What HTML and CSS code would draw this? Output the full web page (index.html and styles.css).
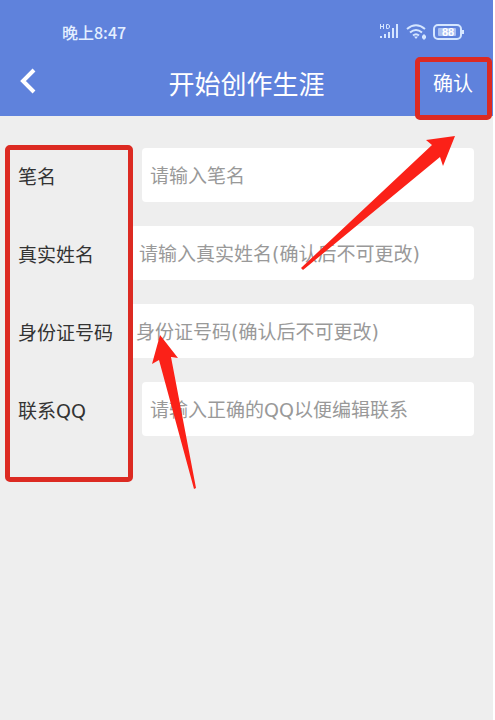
FILE: index.html
```html
<!DOCTYPE html>
<html lang="zh-CN">
<head>
<meta charset="utf-8">
<meta name="viewport" content="width=device-width, initial-scale=1">
<title>开始创作生涯</title>
<link rel="stylesheet" href="styles.css">
</head>
<body>
<div class="screen">
  <header class="header">
    <div class="status">
      <span class="time">晚上8:47</span>
      <svg class="status-icons" width="86" height="20" viewBox="0 0 86 20" aria-hidden="true">
        <g fill="none" stroke="#d5e6ff" stroke-width="1">
          <path d="M1.500 2v5M4.500 2v5M1.500 4.500h3M7.500 2.500v4h1.500l1.500-1v-2l-1.500-1z"/>
        </g>
        <g fill="#d5e6ff">
          <rect x="1" y="14" width="2" height="2"/>
          <rect x="5" y="12" width="2" height="4"/>
          <rect x="9" y="10" width="2" height="6"/>
          <rect x="13" y="6" width="2" height="10"/>
          <rect x="17" y="2" width="2" height="14"/>
        </g>
        <g fill="none" stroke="#d5e6ff" stroke-width="2">
          <path d="M28 7q9-7.500 18 0M31 10.500q6-5 12 0M34 13.500q3-2.500 6 0"/>
        </g>
        <path d="M35 14.500h4l-2 2.500zM43 14l2-2 2 2v2l-2 2-2-2z" fill="#d5e6ff"/>
        <rect x="55" y="3" width="27" height="14" rx="4" fill="none" stroke="#d5e6ff" stroke-width="2"/>
        <rect x="59" y="6" width="18" height="8" rx="1" fill="#a9c0f2"/>
        <path d="M84 8v4" stroke="#d5e6ff" stroke-width="2"/>
        <text class="charge" x="69" y="14" text-anchor="middle">88</text>
      </svg>
    </div>
    <div class="bar">
      <button class="back" type="button" aria-label="返回">
        <svg width="18" height="28" viewBox="0 0 18 28" aria-hidden="true">
          <path d="M15 2L4 13l11 11" fill="none" stroke="#fff" stroke-width="4"/>
        </svg>
      </button>
      <h1 class="title">开始创作生涯</h1>
      <button class="confirm" type="submit" form="author">确认</button>
      <div class="frame frame-confirm"></div>
    </div>
  </header>
  <main class="content">
    <form class="form" id="author">
      <div class="row">
        <label class="label" for="pen">笔名</label>
        <input class="field" id="pen" type="text" placeholder="请输入笔名">
      </div>
      <div class="row">
        <label class="label label-medium" for="name">真实姓名</label>
        <input class="field" id="name" type="text" placeholder="请输入真实姓名(确认后不可更改)">
      </div>
      <div class="row">
        <label class="label label-long" for="idno">身份证号码</label>
        <input class="field" id="idno" type="text" placeholder="身份证号码(确认后不可更改)">
      </div>
      <div class="row">
        <label class="label" for="qq">联系QQ</label>
        <input class="field" id="qq" type="text" placeholder="请输入正确的QQ以便编辑联系">
      </div>
    </form>
    <div class="frame frame-labels"></div>
  </main>
  <svg class="arrows" width="495" height="500" viewBox="0 0 495 500" aria-hidden="true">
    <path d="M455 136L426 140l6 5L301 268l2 2L440 157l3 9z"/>
    <path d="M160 335l18 23-7-1 25 131-2 1L159 360l-7 4z"/>
  </svg>
</div>
</body>
</html>
```
FILE: styles.css
```css
* {
  box-sizing: border-box;
}

body {
  margin: 0;
  background: #fff;
  font-family: "DejaVu Sans", "Noto Sans CJK SC", sans-serif;
}

button {
  border: 0;
  padding: 0;
  background: none;
  color: #fff;
  font-family: inherit;
}

.screen {
  position: relative;
  min-height: 100vh;
  margin-right: 2px;
  background: #eee;
}

.header {
  background: #5f82dc;
  color: #fff;
}

.status {
  display: flex;
  align-items: center;
  justify-content: space-between;
  height: 48px;
  padding: 16px 28px 0 62px;
}

.time {
  color: #e4efff;
  font-family: "Noto Sans CJK SC", sans-serif;
  font-size: 16px;
  font-weight: 500;
}

.charge {
  fill: #fff;
  font-family: "Liberation Sans", sans-serif;
  font-size: 11px;
  font-weight: bold;
}

.bar {
  position: relative;
  display: grid;
  grid-template-columns: 80px 1fr 80px;
  align-items: center;
  height: 68px;
}

.back {
  display: flex;
  padding-left: 19px;
}

.title {
  margin: 0;
  font-size: 26px;
  font-weight: 400;
  text-align: center;
}

.confirm {
  justify-self: end;
  padding-right: 20px;
  font-size: 20px;
}

.content {
  position: relative;
  padding: 32px 19px 0 18px;
}

.form {
  display: grid;
  gap: 24px;
}

.row {
  display: flex;
  align-items: center;
}

.label {
  flex: 0 0 124px;
  color: #333;
  font-size: 19px;
}

.label-medium {
  flex-basis: 113px;
}

.label-long {
  flex-basis: 110px;
}

.field {
  flex: 1;
  min-width: 0;
  height: 54px;
  padding: 2px 8px 0;
  border: 0;
  border-radius: 4px;
  background: #fff;
  color: #333;
  font-family: inherit;
  font-size: 19px;
}

.field::placeholder {
  color: #999;
  opacity: 1;
}

.frame {
  position: absolute;
  border: 5px solid #dc2a22;
  border-radius: 5px;
  pointer-events: none;
}

.frame-confirm {
  top: 9px;
  right: 1px;
  width: 77px;
  height: 63px;
  z-index: 1;
}

.frame-labels {
  top: 29px;
  left: 5px;
  width: 128px;
  height: 337px;
}

.arrows {
  position: absolute;
  top: 0;
  left: 0;
  fill: #fb2118;
  pointer-events: none;
}
```
